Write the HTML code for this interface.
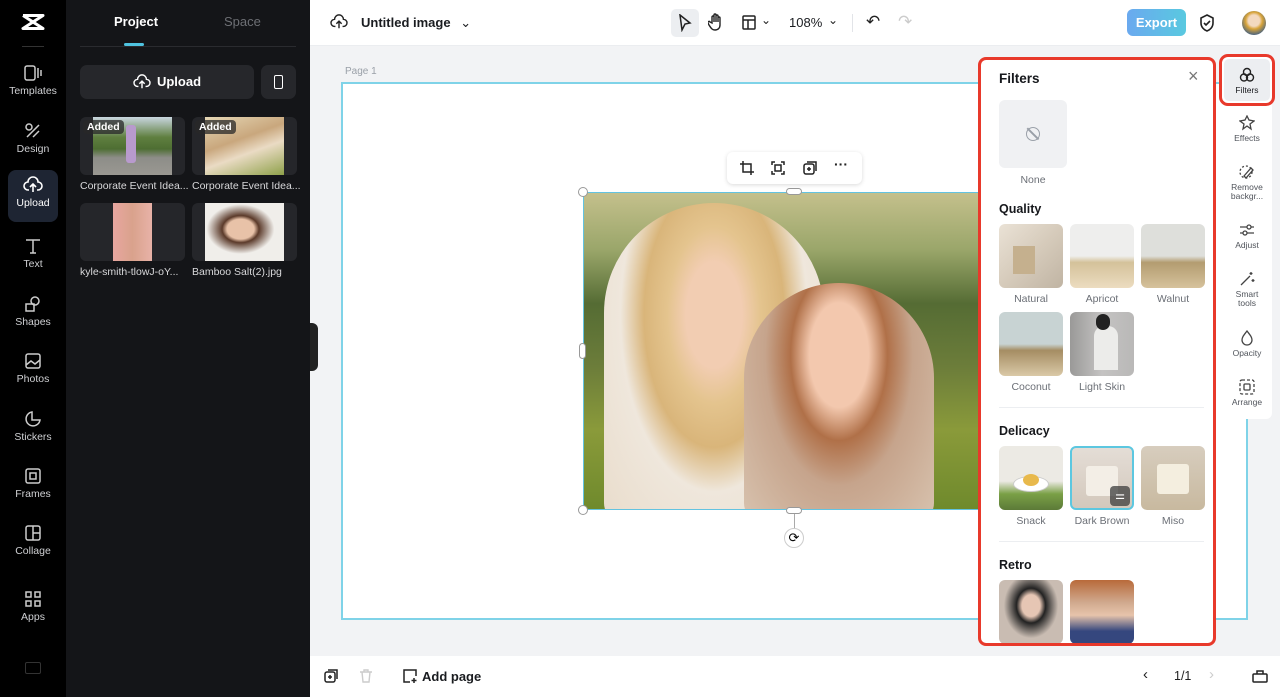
<!DOCTYPE html>
<html><head><meta charset="utf-8"><style>
*{box-sizing:border-box;margin:0;padding:0}
body{width:1280px;height:697px;overflow:hidden;font-family:"Liberation Sans",sans-serif;background:#f2f3f5;position:relative}
.abs{position:absolute}
.nav{left:0;top:0;width:66px;height:697px;background:#000;color:#cfd0d3}
.nav .it{position:absolute;left:8px;width:50px;height:52px;text-align:center;font-size:10.5px}
.nav .it svg{display:block;margin:6px auto 3px}
.panel{left:66px;top:0;width:244px;height:697px;background:#141518;color:#e8e8ea}
.thumb{position:absolute;width:105px;height:58px;border-radius:6px;background:#25262a;overflow:hidden}
.cap{position:absolute;font-size:10.5px;color:#d8d8da;white-space:nowrap}
.added{position:absolute;left:3px;top:3px;background:rgba(40,40,40,.75);color:#fff;font-size:10.5px;font-weight:bold;padding:1px 4px;border-radius:4px}
.top{left:310px;top:0;width:970px;height:46px;background:#fff;border-bottom:1px solid #ebedf0}
.bottom{left:310px;top:656px;width:970px;height:41px;background:#fff}
.fp{left:978px;top:57px;width:238px;height:589px;background:#fff;border:3px solid #e8392b;border-radius:8px;overflow:hidden}
.fl{position:absolute;font-size:10.5px;color:#6b6f76;text-align:center;width:64px}
.ft{position:absolute;width:64px;height:64px;border-radius:6px;overflow:hidden}
.h{position:absolute;font-size:12.5px;font-weight:bold;color:#16181c}
.tb{left:1222px;top:57px;width:50px;height:362px;background:#fff;border-radius:6px}
.tb .t{position:absolute;left:0;width:50px;text-align:center;font-size:8.5px;color:#50545b;line-height:9px}
.tb svg{display:block;margin:0 auto 3px}
</style></head><body>

<div class="abs nav">
  <svg class="abs" style="left:20px;top:13px" width="26" height="18" viewBox="0 0 26 18"><path d="M3 2.5h20L3 15.5h20L3 2.5" fill="none" stroke="#fff" stroke-width="3" stroke-linejoin="round"/></svg>
  <div class="abs" style="left:22px;top:46px;width:22px;height:1px;background:#333"></div>
  <div class="it" style="top:58px"><svg width="18" height="18" viewBox="0 0 18 18" fill="none" stroke="#ccc" stroke-width="1.5"><rect x="1" y="2" width="10" height="14" rx="2"/><path d="M14 4v10M17 6v6"/></svg>Templates</div>
  <div class="it" style="top:116px"><svg width="18" height="18" viewBox="0 0 18 18" fill="none" stroke="#ccc" stroke-width="1.5"><circle cx="5" cy="5" r="3"/><path d="M3 15l12-12M9 15l6-6"/></svg>Design</div>
  <div class="it" style="top:170px;height:52px;background:#1e2533;border-radius:8px;color:#fff"><svg width="20" height="18" viewBox="0 0 20 18" fill="none" stroke="#fff" stroke-width="1.6"><path d="M6 14H5a4 4 0 0 1 0-8 5 5 0 0 1 10 0 4 4 0 0 1 0 8h-1M10 16V9M7 11l3-3 3 3"/></svg>Upload</div>
  <div class="it" style="top:231px"><svg width="18" height="18" viewBox="0 0 18 18" fill="none" stroke="#ccc" stroke-width="1.5"><path d="M2 3h14M9 3v13M6 16h6"/></svg>Text</div>
  <div class="it" style="top:289px"><svg width="18" height="18" viewBox="0 0 18 18" fill="none" stroke="#ccc" stroke-width="1.5"><circle cx="11" cy="6" r="4"/><rect x="2" y="9" width="8" height="7"/></svg>Shapes</div>
  <div class="it" style="top:346px"><svg width="18" height="18" viewBox="0 0 18 18" fill="none" stroke="#ccc" stroke-width="1.5"><rect x="2" y="2" width="14" height="14" rx="2"/><path d="M2 13l5-4 4 3 5-4"/></svg>Photos</div>
  <div class="it" style="top:404px"><svg width="18" height="18" viewBox="0 0 18 18" fill="none" stroke="#ccc" stroke-width="1.5"><path d="M16 10a7 7 0 1 1-8-8v8z"/></svg>Stickers</div>
  <div class="it" style="top:461px"><svg width="18" height="18" viewBox="0 0 18 18" fill="none" stroke="#ccc" stroke-width="1.5"><rect x="2" y="2" width="14" height="14" rx="2"/><rect x="6" y="6" width="6" height="6"/></svg>Frames</div>
  <div class="it" style="top:518px"><svg width="18" height="18" viewBox="0 0 18 18" fill="none" stroke="#ccc" stroke-width="1.5"><rect x="2" y="2" width="14" height="14" rx="2"/><path d="M9 2v14M9 9h7"/></svg>Collage</div>
  <div class="it" style="top:584px"><svg width="18" height="18" viewBox="0 0 18 18" fill="none" stroke="#ccc" stroke-width="1.5"><rect x="2" y="2" width="5" height="5"/><rect x="11" y="2" width="5" height="5"/><rect x="2" y="11" width="5" height="5"/><rect x="11" y="11" width="5" height="5"/></svg>Apps</div>
  <div class="abs" style="left:25px;top:662px;width:16px;height:12px;border:1.5px solid #333;border-radius:2px"></div>
</div>

<div class="abs panel">
  <div class="abs" style="left:48px;top:14px;font-size:13px;font-weight:bold;color:#fff">Project</div>
  <div class="abs" style="left:158px;top:14px;font-size:13px;color:#6d6f74">Space</div>
  <div class="abs" style="left:58px;top:43px;width:20px;height:3px;background:#4fc3e0;border-radius:2px"></div>
  <div class="abs" style="left:14px;top:46px;width:216px;height:1px;background:#2a2b2f"></div>
  <div class="abs" style="left:14px;top:65px;width:174px;height:34px;background:#26272b;border-radius:7px;color:#fff;font-size:13px;font-weight:bold;line-height:34px;text-align:center"><svg style="vertical-align:-4px;margin-right:6px" width="18" height="16" viewBox="0 0 20 18" fill="none" stroke="#fff" stroke-width="1.6"><path d="M6 14H5a4 4 0 0 1 0-8 5 5 0 0 1 10 0 4 4 0 0 1 0 8h-1M10 16V9M7 11l3-3 3 3"/></svg>Upload</div>
  <div class="abs" style="left:195px;top:65px;width:35px;height:34px;background:#26272b;border-radius:7px"><div class="abs" style="left:13px;top:10px;width:9px;height:14px;border:1.5px solid #fff;border-radius:2px"></div></div>
  <div class="thumb" style="left:14px;top:117px"><div class="abs" style="left:13px;top:0;width:79px;height:58px;background:linear-gradient(180deg,#c9d6df 0%,#5f7f3f 35%,#4e6e33 55%,#8d8d88 70%,#9a9892 100%)"></div><div class="abs" style="left:46px;top:8px;width:10px;height:38px;background:#b89acd;border-radius:3px"></div><div class="added">Added</div></div>
  <div class="thumb" style="left:126px;top:117px"><div class="abs" style="left:13px;top:0;width:79px;height:58px;background:linear-gradient(160deg,#e5d7b5,#c9a77d 40%,#eadbc4 60%,#8fa14a 100%)"></div><div class="added">Added</div></div>
  <div class="cap" style="left:14px;top:180px">Corporate Event Idea...</div>
  <div class="cap" style="left:126px;top:180px">Corporate Event Idea...</div>
  <div class="thumb" style="left:14px;top:203px"><div class="abs" style="left:33px;top:0;width:39px;height:58px;background:linear-gradient(90deg,#e8a6a0,#d9a28c 50%,#e8b2a8)"></div></div>
  <div class="thumb" style="left:126px;top:203px"><div class="abs" style="left:13px;top:0;width:79px;height:58px;background:radial-gradient(ellipse at 45% 45%,#e8c2a8 0 22%,#5b3a2a 30%,#f0eeea 55%)"></div></div>
  <div class="cap" style="left:14px;top:266px">kyle-smith-tlowJ-oY...</div>
  <div class="cap" style="left:126px;top:266px">Bamboo Salt(2).jpg</div>
</div>
<div class="abs" style="left:310px;top:323px;width:8px;height:48px;background:#222;border-radius:0 6px 6px 0"></div>

<div class="abs top">
  <svg class="abs" style="left:20px;top:14px" width="18" height="16" viewBox="0 0 20 18" fill="none" stroke="#222" stroke-width="1.6"><path d="M6 14H5a4 4 0 0 1 0-8 5 5 0 0 1 10 0 4 4 0 0 1 0 8h-1M10 16V9M7 11l3-3 3 3"/></svg>
  <div class="abs" style="left:51px;top:15px;font-size:13px;color:#1a1c20;font-weight:bold">Untitled image <span style="font-weight:normal;margin-left:6px">⌄</span></div>
  <div class="abs" style="left:361px;top:9px;width:28px;height:28px;background:#eceef1;border-radius:5px"></div>
  <svg class="abs" style="left:368px;top:14px" width="14" height="18" viewBox="0 0 14 18" fill="none" stroke="#222" stroke-width="1.5"><path d="M2 1l10 8-5 1-3 6z"/></svg>
  <svg class="abs" style="left:398px;top:13px" width="16" height="18" viewBox="0 0 16 18" fill="none" stroke="#222" stroke-width="1.4"><path d="M4 10V4a1 1 0 0 1 2 0v5V2a1 1 0 0 1 2 0v7V3a1 1 0 0 1 2 0v6V5a1 1 0 0 1 2 0v7c0 3-2 5-5 5s-4-2-6-5l-1-2a1 1 0 0 1 2-1z"/></svg>
  <svg class="abs" style="left:432px;top:15px" width="14" height="15" viewBox="0 0 14 15" fill="none" stroke="#222" stroke-width="1.5"><rect x="1" y="1" width="12" height="13" rx="1"/><path d="M1 5h12M6 5v9"/></svg>
  <div class="abs" style="left:451px;top:13px;font-size:12px;color:#222">⌄</div>
  <div class="abs" style="left:479px;top:15px;font-size:13px;color:#1a1c20">108%</div>
  <div class="abs" style="left:518px;top:13px;font-size:12px;color:#222">⌄</div>
  <div class="abs" style="left:542px;top:14px;width:1px;height:18px;background:#e2e4e8"></div>
  <div class="abs" style="left:556px;top:12px;font-size:17px;color:#222">↶</div>
  <div class="abs" style="left:588px;top:12px;font-size:17px;color:#ccc">↷</div>
  <div class="abs" style="left:817px;top:9px;width:59px;height:27px;border-radius:6px;background:linear-gradient(90deg,#6aa9ef,#59c9e0);color:#fff;font-size:13px;font-weight:bold;text-align:center;line-height:27px">Export</div>
  <svg class="abs" style="left:889px;top:14px" width="16" height="18" viewBox="0 0 16 18" fill="none" stroke="#222" stroke-width="1.6"><path d="M8 1l6 3v5c0 4-3 7-6 8-3-1-6-4-6-8V4z"/><path d="M5 9l2 2 4-4"/></svg>
  <div class="abs" style="left:932px;top:11px;width:24px;height:24px;border-radius:12px;background:radial-gradient(circle at 50% 40%,#f3d9c0 0 30%,#d8a43a 45%,#3c5d86 80%)"></div>
</div>

<div class="abs" style="left:345px;top:66px;font-size:10px;color:#9aa0a8">Page 1</div>
<div class="abs" style="left:341px;top:82px;width:907px;height:538px;background:#fff;border:2px solid #7fd3e8"></div>
<div class="abs" style="left:583px;top:192px;width:398px;height:318px;background:linear-gradient(180deg,#c4c08c 0%,#9aa66a 18%,#556c34 35%,#6c7d3a 55%,#8a9a3a 75%,#6f8a2c 100%);border:1.5px solid #63c3e0;overflow:hidden">
  <div class="abs" style="left:20px;top:10px;width:220px;height:320px;border-radius:110px 110px 20px 20px;background:radial-gradient(ellipse at 50% 35%,#f2cdb2 0 18%,#e4c48e 30%,#d9b57a 45%,#efe7dc 60%,#e9dccb 100%)"></div>
  <div class="abs" style="left:160px;top:90px;width:190px;height:240px;border-radius:95px 95px 20px 20px;background:radial-gradient(ellipse at 50% 30%,#f3c8ae 0 22%,#b07048 36%,#c6a48c 55%,#d8c3af 100%)"></div>
</div>
<div class="abs" style="left:578px;top:187px;width:10px;height:10px;border-radius:5px;background:#fff;border:1px solid #999"></div>
<div class="abs" style="left:578px;top:505px;width:10px;height:10px;border-radius:5px;background:#fff;border:1px solid #999"></div>
<div class="abs" style="left:579px;top:343px;width:7px;height:16px;border-radius:4px;background:#fff;border:1px solid #999"></div>
<div class="abs" style="left:786px;top:188px;width:16px;height:7px;border-radius:4px;background:#fff;border:1px solid #999"></div>
<div class="abs" style="left:786px;top:507px;width:16px;height:7px;border-radius:4px;background:#fff;border:1px solid #999"></div>
<div class="abs" style="left:794px;top:514px;width:1px;height:14px;background:#aaa"></div>
<div class="abs" style="left:784px;top:528px;width:20px;height:20px;border-radius:10px;background:#fff;border:1px solid #ccc;text-align:center;font-size:13px;line-height:18px">⟳</div>
<div class="abs" style="left:727px;top:152px;width:135px;height:32px;background:#fff;border-radius:6px;box-shadow:0 1px 4px rgba(0,0,0,.15);font-size:14px;color:#222">
  <svg class="abs" style="left:13px;top:9px" width="14" height="14" viewBox="0 0 14 14" fill="none" stroke="#222" stroke-width="1.5"><path d="M3 0v11h11M0 3h11v11"/></svg>
  <svg class="abs" style="left:44px;top:9px" width="14" height="14" viewBox="0 0 14 14" fill="none" stroke="#222" stroke-width="1.5"><path d="M1 4V1h3M10 1h3v3M13 10v3h-3M4 13H1v-3"/><rect x="4" y="4" width="6" height="6"/></svg>
  <svg class="abs" style="left:76px;top:9px" width="14" height="14" viewBox="0 0 14 14" fill="none" stroke="#222" stroke-width="1.5"><rect x="1" y="3" width="10" height="10" rx="2"/><path d="M4 1h9v9M6 6v4M4 8h4"/></svg>
  <div class="abs" style="left:107px;top:4px;font-weight:bold">···</div>
</div>

<div class="abs fp">
  <div class="h" style="left:18px;top:11px;font-size:13.5px">Filters</div>
  <div class="abs" style="left:207px;top:6px;font-size:18px;color:#777">×</div>
  <div class="ft" style="left:18px;top:40px;width:68px;height:68px;background:#f0f1f3"><div class="abs" style="left:27px;top:27px;width:14px;height:14px;border:1.5px solid #9aa0a8;border-radius:7px"></div><div class="abs" style="left:33px;top:26px;width:1.5px;height:16px;background:#9aa0a8;transform:rotate(-45deg)"></div></div>
  <div class="fl" style="left:20px;top:114px">None</div>
  <div class="h" style="left:18px;top:142px">Quality</div>
  <div class="ft" style="left:18px;top:164px;background:linear-gradient(135deg,#eae2d6,#d6cbbb 50%,#c0b4a3)"><div class="abs" style="left:14px;top:22px;width:22px;height:28px;background:#c5b08e"></div></div>
  <div class="ft" style="left:89px;top:164px;background:linear-gradient(180deg,#eeeeed 50%,#d4c29a 60%,#ecdcc0)"></div>
  <div class="ft" style="left:160px;top:164px;background:linear-gradient(180deg,#dedfdb 50%,#b39c70 60%,#d6c29c)"></div>
  <div class="fl" style="left:18px;top:233px">Natural</div><div class="fl" style="left:89px;top:233px">Apricot</div><div class="fl" style="left:160px;top:233px">Walnut</div>
  <div class="ft" style="left:18px;top:252px;background:linear-gradient(180deg,#c8d3d3 50%,#a58d63 60%,#dac9a7)"></div>
  <div class="ft" style="left:89px;top:252px;background:linear-gradient(90deg,#9a9998,#c4c3c2 50%,#b9b8b7)"><div class="abs" style="left:24px;top:14px;width:24px;height:44px;background:#ececea;border-radius:10px 10px 0 0"></div><div class="abs" style="left:26px;top:2px;width:14px;height:16px;background:#222;border-radius:7px"></div></div>
  <div class="fl" style="left:18px;top:321px">Coconut</div><div class="fl" style="left:89px;top:321px">Light Skin</div>
  <div class="abs" style="left:18px;top:347px;width:205px;height:1px;background:#eceef1"></div>
  <div class="h" style="left:18px;top:364px">Delicacy</div>
  <div class="ft" style="left:18px;top:386px;background:linear-gradient(180deg,#eceae4 55%,#7aa046 75%,#5c7a38)"><div class="abs" style="left:14px;top:30px;width:36px;height:16px;border-radius:50%;background:#fff;border:1px solid #ccc"></div><div class="abs" style="left:24px;top:28px;width:16px;height:12px;border-radius:50%;background:#e8b94c"></div></div>
  <div class="ft" style="left:89px;top:386px;background:linear-gradient(180deg,#e4ddd6,#d3c8bc);border:2px solid #5cc7e0"><div class="abs" style="left:14px;top:18px;width:32px;height:30px;background:#f3eee6;border-radius:3px"></div><div class="abs" style="left:38px;top:38px;width:20px;height:20px;background:rgba(60,60,60,.75);border-radius:4px;color:#fff;font-size:11px;text-align:center;line-height:20px">⚌</div></div>
  <div class="ft" style="left:160px;top:386px;background:linear-gradient(180deg,#d7cdbe,#c8b99f)"><div class="abs" style="left:16px;top:18px;width:32px;height:30px;background:#f4eedf;border-radius:3px"></div></div>
  <div class="fl" style="left:18px;top:455px">Snack</div><div class="fl" style="left:89px;top:455px">Dark Brown</div><div class="fl" style="left:160px;top:455px">Miso</div>
  <div class="abs" style="left:18px;top:481px;width:205px;height:1px;background:#eceef1"></div>
  <div class="h" style="left:18px;top:498px">Retro</div>
  <div class="ft" style="left:18px;top:520px;background:radial-gradient(ellipse at 50% 40%,#e6c6b4 0 20%,#222 32%,#c9bcb2 60%)"></div>
  <div class="ft" style="left:89px;top:520px;background:linear-gradient(180deg,#b86a3a,#d0a98e 35%,#e7c4ab 55%,#35477e 80%)"></div>
</div>

<div class="abs tb">
  <div class="abs" style="left:-3px;top:-3px;width:56px;height:52px;border:3px solid #e8392b;border-radius:9px"></div>
  <div class="abs" style="left:2px;top:2px;width:46px;height:42px;background:#eceef1;border-radius:5px"></div>
  <div class="t" style="top:10px;color:#16181c"><svg width="16" height="16" viewBox="0 0 16 16" fill="none" stroke="#222" stroke-width="1.4"><circle cx="8" cy="5" r="3.5"/><circle cx="5" cy="10.5" r="3.5"/><circle cx="11" cy="10.5" r="3.5"/></svg>Filters</div>
  <div class="t" style="top:58px"><svg width="16" height="16" viewBox="0 0 16 16" fill="none" stroke="#444" stroke-width="1.3"><path d="M8 1l2 4 5 1-4 3 1 5-4-3-4 3 1-5-4-3 5-1z"/></svg>Effects</div>
  <div class="t" style="top:107px"><svg width="16" height="16" viewBox="0 0 16 16" fill="none" stroke="#444" stroke-width="1.3"><circle cx="7" cy="8" r="6" stroke-dasharray="2 2"/><path d="M5 12l7-8 2 2-7 8z"/></svg>Remove<br>backgr...</div>
  <div class="t" style="top:165px"><svg width="16" height="16" viewBox="0 0 16 16" fill="none" stroke="#444" stroke-width="1.3"><path d="M1 5h14M1 11h14"/><circle cx="10" cy="5" r="2" fill="#fff"/><circle cx="6" cy="11" r="2" fill="#fff"/></svg>Adjust</div>
  <div class="t" style="top:214px"><svg width="16" height="16" viewBox="0 0 16 16" fill="none" stroke="#444" stroke-width="1.3"><path d="M2 14l9-9M12 1v3M10.5 2.5h3M14 8v3M12.5 9.5h3"/></svg>Smart<br>tools</div>
  <div class="t" style="top:273px"><svg width="16" height="16" viewBox="0 0 16 16" fill="none" stroke="#444" stroke-width="1.3"><path d="M8 1c3 4 5 6 5 9a5 5 0 0 1-10 0c0-3 2-5 5-9z"/></svg>Opacity</div>
  <div class="t" style="top:322px"><svg width="16" height="16" viewBox="0 0 16 16" fill="none" stroke="#444" stroke-width="1.3"><rect x="1" y="1" width="14" height="14" rx="2" stroke-dasharray="3 2"/><rect x="5" y="5" width="6" height="6" rx="1"/></svg>Arrange</div>
</div>

<div class="abs bottom">
  <svg class="abs" style="left:14px;top:13px" width="14" height="14" viewBox="0 0 14 14" fill="none" stroke="#222" stroke-width="1.5"><rect x="1" y="3" width="10" height="10" rx="2"/><path d="M4 1h9v9M6 6v4M4 8h4"/></svg>
  <svg class="abs" style="left:49px;top:13px" width="14" height="14" viewBox="0 0 14 14" fill="none" stroke="#ccc" stroke-width="1.4"><path d="M1 3h12M5 3V1h4v2M3 3l1 10h6l1-10"/></svg>
  <svg class="abs" style="left:92px;top:12px" width="16" height="16" viewBox="0 0 16 16" fill="none" stroke="#222" stroke-width="1.5"><path d="M8 14H2V2h12v6M12 10v5M9.5 12.5h5"/></svg>
  <div class="abs" style="left:112px;top:13px;font-size:13px;font-weight:bold;color:#1a1c20">Add page</div>
  <div class="abs" style="left:833px;top:10px;font-size:15px;color:#222">‹</div>
  <div class="abs" style="left:864px;top:13px;font-size:12.5px;color:#222">1/1</div>
  <div class="abs" style="left:899px;top:10px;font-size:15px;color:#ccc">›</div>
  <svg class="abs" style="left:942px;top:13px" width="16" height="14" viewBox="0 0 16 14" fill="none" stroke="#222" stroke-width="1.5"><rect x="1" y="5" width="14" height="8" rx="1"/><path d="M5 5V2h6v3"/></svg>
</div>
</body></html>
